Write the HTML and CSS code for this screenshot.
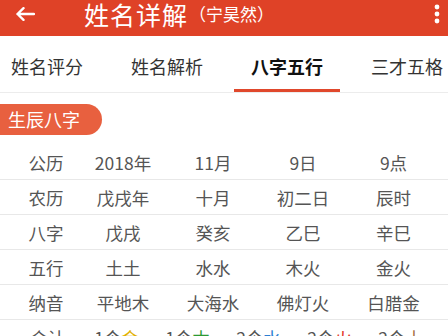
FILE: index.html
```html
<!DOCTYPE html>
<html lang="zh">
<head>
<meta charset="utf-8">
<link rel="stylesheet" href="styles.css">
</head>
<body>
<div class="page">
  <header class="topbar">
    <span class="back">
      <svg width="20" height="14" viewBox="0 0 20 14"><path d="M19 7H2.5M8.5 1.2L2.5 7l6 5.8" fill="none" stroke="#fff" stroke-width="2.4" stroke-linecap="round" stroke-linejoin="round"/></svg>
    </span>
    <span class="title">姓名详解</span>
    <span class="sub">（宁昊然）</span>
    <span class="more">
      <svg width="6" height="20" viewBox="0 0 6 20"><circle cx="3" cy="3" r="2.4" fill="#fff"/><circle cx="3" cy="10" r="2.4" fill="#fff"/><circle cx="3" cy="17" r="2.4" fill="#fff"/></svg>
    </span>
  </header>
  <nav class="tabs">
    <div class="tab"><span class="tab-text">姓名评分</span><span class="bar"></span></div>
    <div class="tab"><span class="tab-text">姓名解析</span><span class="bar"></span></div>
    <div class="tab active"><span class="tab-text">八字五行</span><span class="bar"></span></div>
    <div class="tab"><span class="tab-text">三才五格</span><span class="bar"></span></div>
  </nav>
  <div class="badge">生辰八字</div>
  <div class="table">
    <div class="row"><span>公历</span><span>2018年</span><span>11月</span><span>9日</span><span>9点</span></div>
    <div class="row"><span>农历</span><span>戊戌年</span><span>十月</span><span>初二日</span><span>辰时</span></div>
    <div class="row"><span>八字</span><span>戊戌</span><span>癸亥</span><span>乙巳</span><span>辛巳</span></div>
    <div class="row"><span>五行</span><span>土土</span><span>水水</span><span>木火</span><span>金火</span></div>
    <div class="row"><span>纳音</span><span>平地木</span><span>大海水</span><span>佛灯火</span><span>白腊金</span></div>
    <div class="row total"><span>合计</span><span>1个<b class="jin">金</b></span><span>1个<b class="mu">木</b></span><span>2个<b class="shui">水</b></span><span>2个<b class="huo">火</b></span><span>2个<b class="tu">土</b></span></div>
  </div>
</div>
</body>
</html>
```
FILE: styles.css
```css
html, body {
  margin: 0;
  padding: 0;
  background: #fff;
}
body {
  width: 448px;
  height: 336px;
  overflow: hidden;
  font-family: "Noto Sans CJK SC", "Noto Sans", sans-serif;
}
.page {
  width: 448px;
}
.topbar {
  height: 36px;
  box-sizing: border-box;
  padding-bottom: 8px;
  background: #df4227;
  display: flex;
  align-items: center;
  color: #fff;
}
.back {
  display: flex;
  margin-left: 15px;
  width: 20px;
}
.title {
  margin-left: 49px;
  font-size: 25px;
  line-height: 28px;
  letter-spacing: 1px;
}
.sub {
  margin-left: 1px;
  font-size: 17px;
  line-height: 22px;
}
.more {
  margin-left: auto;
  margin-right: 8px;
  display: flex;
}
.tabs {
  display: flex;
  height: 56px;
  margin-left: -13px;
  border-bottom: 1px solid #ececec;
}
.tab {
  flex: 0 0 120px;
  display: flex;
  flex-direction: column;
  align-items: center;
}
.tab-text {
  margin-top: 18px;
  font-size: 18px;
  line-height: 24px;
  color: #333;
}
.bar {
  margin-top: auto;
  width: 106px;
  height: 3px;
}
.tab.active .tab-text {
  font-weight: bold;
  color: #111;
}
.tab.active .bar {
  background: #e0482c;
}
.badge {
  margin-top: 11px;
  width: 94px;
  height: 31px;
  padding-left: 8px;
  background: #e8603f;
  border-radius: 0 16px 16px 0;
  color: #fff;
  font-size: 18px;
  line-height: 31px;
}
.table {
  margin-top: 10px;
}
.row {
  display: grid;
  grid-template-columns: 64px 90px 90px 90px 91px;
  padding-left: 14px;
  height: 34px;
  border-bottom: 1px solid #e8e8e8;
  align-items: center;
  text-align: center;
  font-size: 17.5px;
  color: #555;
}
.row.total {
  grid-template-columns: 67px repeat(5, 71px);
  border-bottom: none;
}
.row b {
  font-weight: normal;
}
.jin { color: #e2b100; }
.mu { color: #2c9a33; }
.shui { color: #2d7fd2; }
.huo { color: #e3321f; }
.tu { color: #a26d3a; }
```
